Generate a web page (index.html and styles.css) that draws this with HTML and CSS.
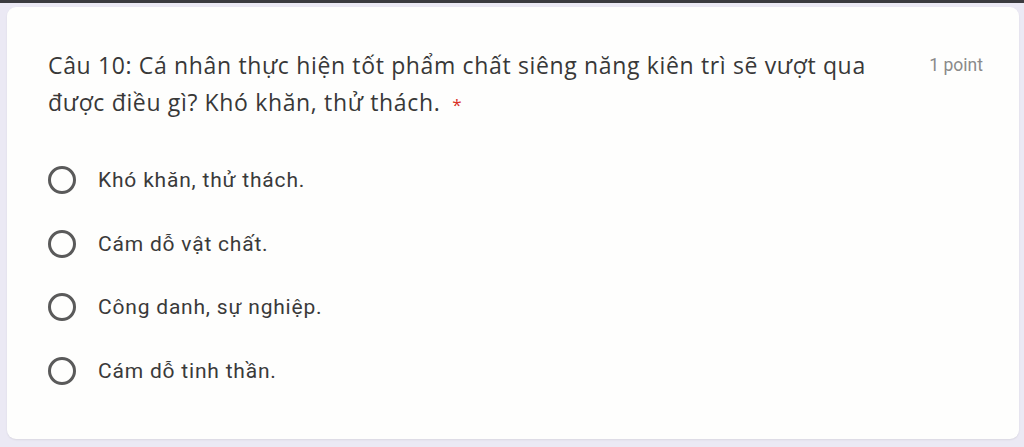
FILE: index.html
```html
<!DOCTYPE html>
<html lang="vi">
<head>
<meta charset="utf-8">
<link rel="stylesheet" href="styles.css">
</head>
<body>
<div class="topbar"></div>
<div class="card">
  <div class="header">
    <div class="question">Câu 10: Cá nhân thực hiện tốt phẩm chất siêng năng kiên trì sẽ vượt qua<br>được điều gì? Khó khăn, thử thách.<span class="req">*</span></div>
    <div class="points">1 point</div>
  </div>
  <div class="options">
    <div class="option"><span class="radio"></span><span class="label">Khó khăn, thử thách.</span></div>
    <div class="option"><span class="radio"></span><span class="label">Cám dỗ vật chất.</span></div>
    <div class="option"><span class="radio"></span><span class="label">Công danh, sự nghiệp.</span></div>
    <div class="option"><span class="radio"></span><span class="label">Cám dỗ tinh thần.</span></div>
  </div>
</div>
</body>
</html>
```
FILE: styles.css
```css
html, body {
  margin: 0;
  padding: 0;
  background: #ebe9f4;
  height: 447px;
  overflow: hidden;
}
.topbar {
  height: 3px;
  background: #3b3b3f;
}
.card {
  margin: 4px 5px 0 7px;
  height: 432px;
  box-sizing: border-box;
  background: #fefefd;
  border-radius: 9px;
  box-shadow: 0 1px 2px rgba(0,0,0,0.08);
  padding: 40px 36px 0 41px;
}
.header {
  display: flex;
  align-items: flex-start;
  justify-content: space-between;
}
.question {
  width: 845px;
  font-family: "Open Sans", sans-serif;
  font-size: 23px;
  line-height: 37px;
  color: #383838;
  letter-spacing: 0.65px;
}
.req {
  display: inline-block;
  margin-left: 12px;
  color: #d93025;
  font-size: 17px;
  line-height: 1;
}
.points {
  font-family: "Liberation Sans Narrow", "Roboto", sans-serif;
  font-size: 17.5px;
  color: #8a8a8a;
  padding-top: 8px;
}
.options {
  display: flex;
  flex-direction: column;
  gap: 35.5px;
  margin-top: 45px;
}
.option {
  display: flex;
  align-items: center;
  height: 28px;
}
.radio {
  width: 22px;
  height: 22px;
  border: 3px solid #5a5a5a;
  border-radius: 50%;
  margin-right: 22px;
  flex: none;
}
.label {
  font-family: Roboto, sans-serif;
  font-size: 21px;
  letter-spacing: 0.8px;
  color: #3a3a3a;
}
```
